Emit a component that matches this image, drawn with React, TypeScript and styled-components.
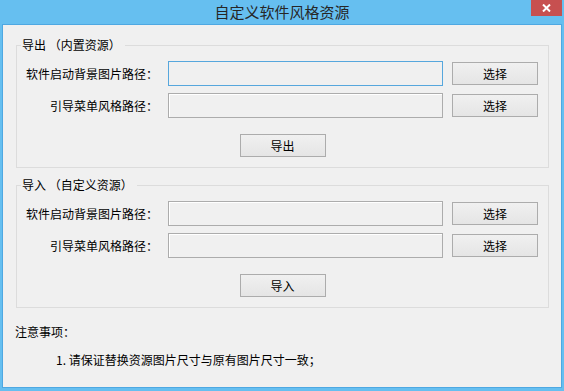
import React from 'react';
import styled, { createGlobalStyle } from 'styled-components';

const GlobalStyle = createGlobalStyle`
  html, body {
    margin: 0;
    padding: 0;
    background: #66bff0;
  }
  * {
    box-sizing: border-box;
    text-spacing-trim: space-all;
  }
`;

interface PathRow {
  label: string;
  focused?: boolean;
}

interface Group {
  title: string;
  action: string;
  rows: PathRow[];
}

const groups: Group[] = [
  {
    title: '导出 （内置资源）',
    action: '导出',
    rows: [{ label: '软件启动背景图片路径：', focused: true }, { label: '引导菜单风格路径：' }],
  },
  {
    title: '导入 （自定义资源）',
    action: '导入',
    rows: [{ label: '软件启动背景图片路径：' }, { label: '引导菜单风格路径：' }],
  },
];

function App() {
  return (
    <S.Window>
      <GlobalStyle />
      <S.TitleBar>
        <span />
        <S.Title>自定义软件风格资源</S.Title>
        <S.CloseButton>
          <svg width="9" height="8" viewBox="0 0 9 8">
            <path d="M1 0.5 L8 7.5 M8 0.5 L1 7.5" stroke="#fff" strokeWidth="2" fill="none" />
          </svg>
        </S.CloseButton>
      </S.TitleBar>

      <S.Client>
        {groups.map((group) => (
          <S.GroupBox key={group.title}>
            <S.Legend>{group.title}</S.Legend>
            <S.Rows>
              {group.rows.map((row) => (
                <React.Fragment key={row.label}>
                  <S.Label>{row.label}</S.Label>
                  <S.PathBox $focused={row.focused} />
                  <S.Button>选择</S.Button>
                </React.Fragment>
              ))}
            </S.Rows>
            <S.ActionRow>
              <S.Button>{group.action}</S.Button>
            </S.ActionRow>
          </S.GroupBox>
        ))}

        <S.Notes>
          <S.NoteTitle>注意事项：</S.NoteTitle>
          <S.NoteItem>1. 请保证替换资源图片尺寸与原有图片尺寸一致；</S.NoteItem>
        </S.Notes>
      </S.Client>
    </S.Window>
  );
}

const S = {
  Window: styled.div`
    display: flex;
    flex-direction: column;
    width: 564px;
    height: 391px;
    padding: 0 2px 3px 2px;
    background: #66bff0;
    font-family: 'Noto Sans CJK SC', 'Noto Sans', sans-serif;
    font-size: 12px;
    color: #000;
  `,

  TitleBar: styled.div`
    display: grid;
    grid-template-columns: 1fr auto 1fr;
    height: 24px;
    flex-shrink: 0;
  `,

  Title: styled.div`
    align-self: center;
    font-family: 'Noto Sans CJK SC', 'Noto Sans', sans-serif;
    font-size: 15px;
    line-height: 18px;
    color: #262626;
  `,

  CloseButton: styled.div`
    justify-self: end;
    align-self: start;
    display: flex;
    align-items: center;
    justify-content: center;
    width: 31px;
    height: 16px;
    background: #c75050;
  `,

  Client: styled.div`
    flex: 1;
    display: flex;
    flex-direction: column;
    padding: 20px 12px 0 12px;
    background: #f0f0f0;
    border: 1px solid #4ea8e2;
  `,

  GroupBox: styled.div`
    display: flex;
    flex-direction: column;
    margin: 0 0 17px 1px;
    padding: 0 0 10px 0;
    border: 1px solid #dcdcdc;
  `,

  Legend: styled.div`
    align-self: flex-start;
    margin: -8px 0 0 4px;
    padding: 0 4px 0 1px;
    line-height: 14px;
    background: #f0f0f0;
  `,

  Rows: styled.div`
    display: grid;
    grid-template-columns: 132px 275px 86px;
    column-gap: 10px;
    row-gap: 7px;
    align-items: center;
    padding: 9px 0 0 9px;

    & > :nth-child(3n) {
      margin-left: -1px;
    }
  `,

  Label: styled.div`
    justify-self: end;
    white-space: nowrap;
    line-height: 14px;
  `,

  PathBox: styled.div<{ $focused?: boolean }>`
    height: 25px;
    background: #f0f0f0;
    border: 1px solid ${(p) => (p.$focused ? '#56a7dd' : '#acacac')};
    box-shadow: ${(p) => (p.$focused ? 'none' : 'inset 1px 1px 0 #fff')};
  `,

  Button: styled.div`
    display: flex;
    align-items: center;
    justify-content: center;
    width: 86px;
    height: 23px;
    border: 1px solid #acacac;
    background: linear-gradient(#f0f0f0, #e5e5e5);
    line-height: 14px;
  `,

  ActionRow: styled.div`
    display: flex;
    justify-content: center;
    padding-top: 16px;
  `,

  Notes: styled.div`
    display: flex;
    flex-direction: column;
    row-gap: 14px;
    line-height: 14px;
  `,

  NoteTitle: styled.div`
    padding-top: 0;
  `,

  NoteItem: styled.div`
    padding-left: 41px;
  `,
};

export default App;
